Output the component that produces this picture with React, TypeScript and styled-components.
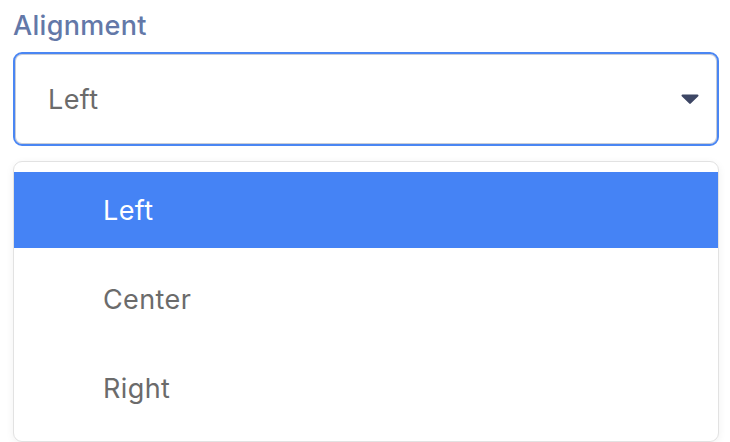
import styled, { createGlobalStyle } from "styled-components";

const GlobalStyle = createGlobalStyle`
  html, body {
    margin: 0;
    padding: 0;
    background: #ffffff;
    overflow: hidden;
  }
  body {
    font-family: "Inter", "Noto Sans", sans-serif;
    -webkit-font-smoothing: antialiased;
  }
`;

const OPTIONS = ["Left", "Center", "Right"];
const SELECTED = "Left";

export default function App() {
  return (
    <>
      <GlobalStyle />
      <Wrapper>
        <Label>Alignment</Label>
        <SelectBox>
          <SelectValue>{SELECTED}</SelectValue>
          <Caret width="18" height="10" viewBox="0 0 18 10">
            <path
              d="M1.5 0.5h15a1 1 0 0 1 0.75 1.65l-7.5 7.3a1 1 0 0 1-1.5 0l-7.5-7.3A1 1 0 0 1 1.5 0.5z"
              fill="#3d4664"
            />
          </Caret>
        </SelectBox>
        <Menu>
          {OPTIONS.map((o) => (
            <Option key={o} $active={o === SELECTED}>
              {o}
            </Option>
          ))}
        </Menu>
      </Wrapper>
    </>
  );
}

const Wrapper = styled.div`
  display: flex;
  flex-direction: column;
  width: 706px;
  padding: 9px 0 0 13px;
`;

const Label = styled.div`
  font-size: 27px;
  font-weight: 500;
  letter-spacing: 0.3px;
  color: #6378a8;
  line-height: 34px;
  margin-bottom: 9px;
`;

const SelectBox = styled.div`
  display: flex;
  align-items: center;
  justify-content: space-between;
  height: 94px;
  box-sizing: border-box;
  padding: 0 18px 0 33px;
  border: 2px solid #4a86f3;
  border-radius: 9px;
  box-shadow: inset 0 0 0 1px #c8ccd6;
  background: #ffffff;
`;

const SelectValue = styled.span`
  font-size: 27px;
  letter-spacing: 0.4px;
  color: #6b6b6b;
`;

const Caret = styled.svg`
  display: block;
`;

const Menu = styled.div`
  margin-top: 15px;
  height: 281px;
  padding-top: 10px;
  box-sizing: border-box;
  border: 1px solid #e2e2e2;
  border-radius: 9px;
  background: #ffffff;
  box-shadow: 0 2px 8px rgba(0, 0, 0, 0.06);
  display: flex;
  flex-direction: column;
  gap: 13px;
  overflow: hidden;
`;

const Option = styled.div<{ $active?: boolean }>`
  height: 76px;
  flex: none;
  display: flex;
  align-items: center;
  padding-left: 89px;
  font-size: 27px;
  letter-spacing: 0.4px;
  color: ${({ $active }) => ($active ? "#ffffff" : "#6b6b6b")};
  background: ${({ $active }) => ($active ? "#4583f5" : "transparent")};
`;
